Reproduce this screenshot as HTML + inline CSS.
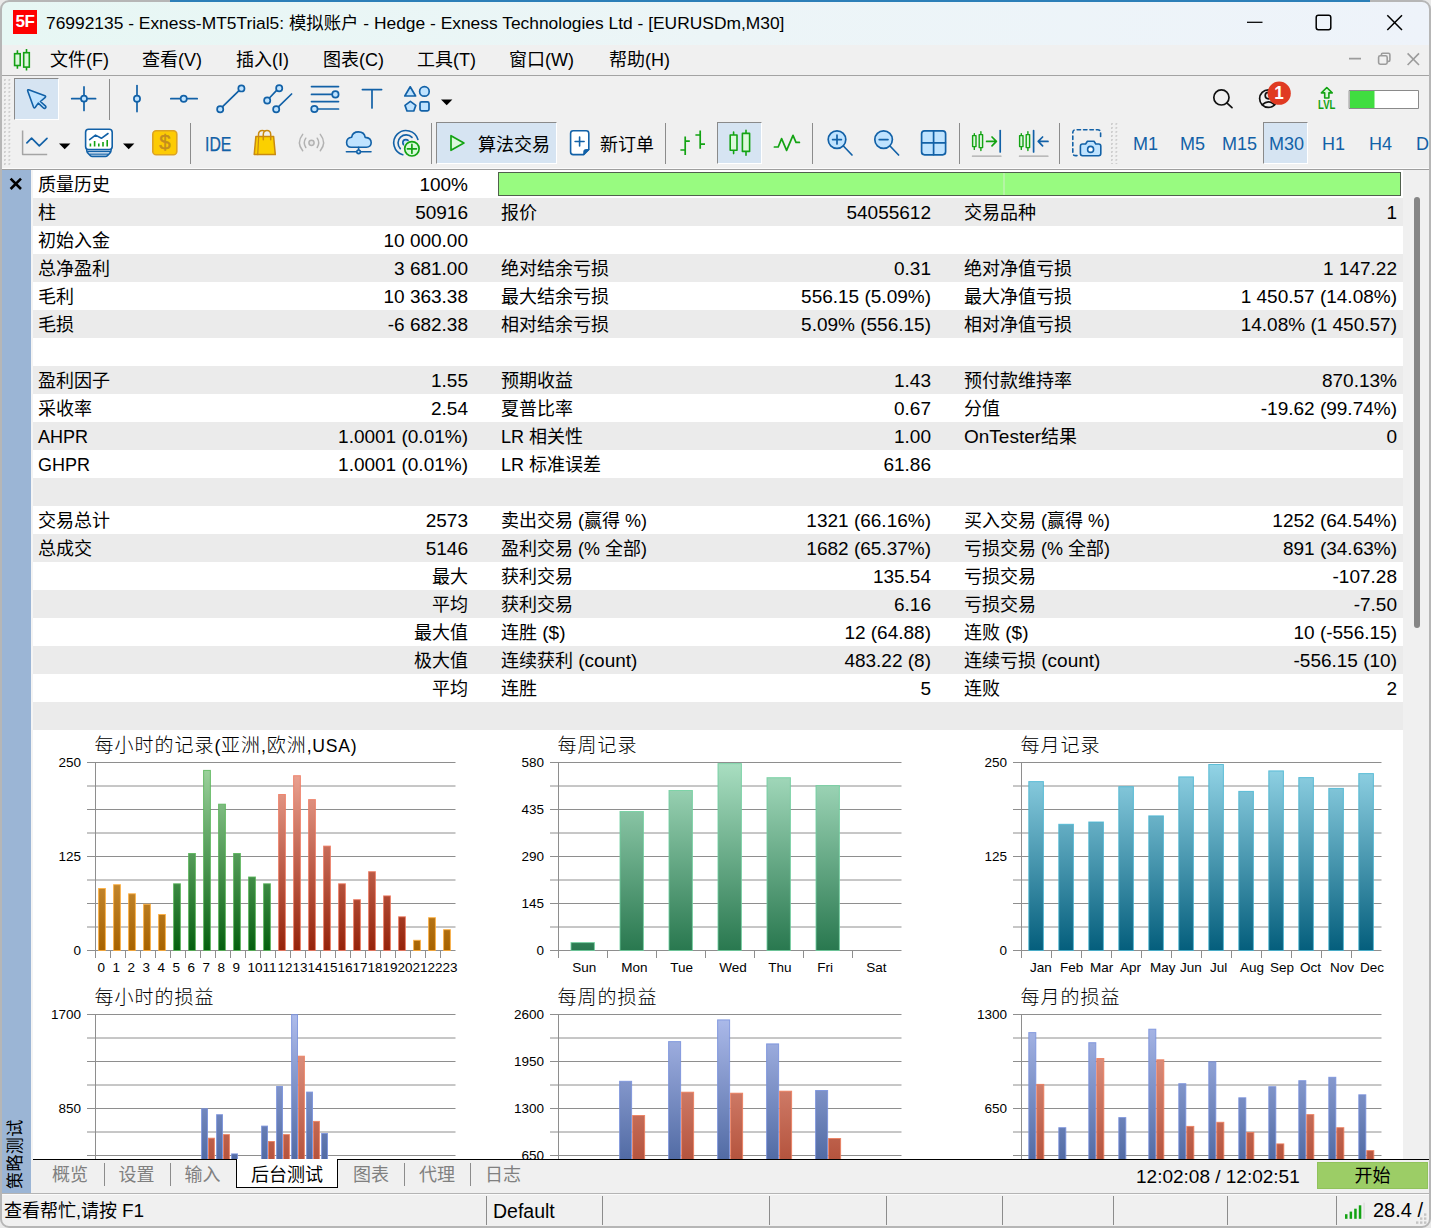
<!DOCTYPE html><html lang="zh-CN"><head><meta charset="utf-8"><title>MetaTrader 5 Strategy Tester</title><style>
*{box-sizing:border-box}
html,body{margin:0;padding:0}
body{width:1431px;height:1228px;overflow:hidden;background:#e9e9e9;font-family:"Liberation Sans","Noto Sans CJK SC",sans-serif;font-size:18px;color:#000;position:relative}
.abs{position:absolute}
#win{position:absolute;left:0;top:0;width:1431px;height:1228px;border-radius:9px 9px 9px 9px;overflow:hidden;background:#f0f0f0}
#frame{position:absolute;left:0;top:0;width:1431px;height:1228px;border-radius:9px;border:2px solid #b6b6b6;border-top-width:2px;pointer-events:none;z-index:50}
#topstrip{position:absolute;left:170px;top:0;width:1200px;height:2px;background:#2c7fb8;z-index:51}
#title{position:absolute;left:0;top:0;width:1431px;height:45px;background:linear-gradient(90deg,#e7f7f4 0%,#ecf5f7 50%,#eef3fa 100%)}
#title .t{position:absolute;left:46px;top:9.6px;height:26px;line-height:26px;font-size:17.4px;white-space:pre;letter-spacing:0px}
#logo{position:absolute;left:13px;top:10px;width:24px;height:24px;background:#fe0000;color:#fff;font-weight:bold;font-size:17px;line-height:24px;text-align:center;letter-spacing:-0.5px}
#menu{position:absolute;left:0;top:45px;width:1431px;height:31px;background:#f0f0f0}
#menu span.m{position:absolute;top:1px;height:30px;line-height:29px;white-space:pre}
.n{font-size:19px}.n8{font-size:18px}
#tb{position:absolute;left:0;top:76px;width:1431px;height:94px;background:#f0f0f0}
.sel{position:absolute;background:#d6e4f2;border-top:1px solid #8a8a8a;border-left:1px solid #8a8a8a;border-right:1px solid #fff;border-bottom:1px solid #fff}
.tbt{position:absolute;white-space:pre;line-height:24px;height:24px}
.tf{position:absolute;top:131px;height:24px;line-height:24px;color:#1261a7;font-size:18px;white-space:pre}
#strip{position:absolute;left:2px;top:170px;width:29px;height:1023px;background:#9bb5d5}
#tbl{position:absolute;left:33px;top:170px;width:1370px;height:560px;background:#fff}
.r{position:absolute;left:0;width:1370px;height:28px;line-height:30px;white-space:pre}
.r.g{background:#ebebeb}
.r span.c{position:absolute;top:0;height:28px;line-height:30px}
.l1{left:5px}.v1{right:935px;text-align:right}
.l2{left:468px}.v2{right:472px}
.l3{left:931px}.v3{right:6px}
#charts{position:absolute;left:33px;top:730px;width:1370px;height:429px;background:#fff;overflow:hidden}
#sbar{position:absolute;left:1403px;top:170px;width:26px;height:989px;background:#f0f0f0}
#tabs{position:absolute;left:31px;top:1159px;width:1398px;height:34px;background:#f0f0f0}
.tab{position:absolute;top:4px;height:26px;line-height:25px;color:#808080;white-space:pre}
.tsep{position:absolute;top:4px;width:1px;height:23px;background:#8c8c8c}
#status{position:absolute;left:0;top:1193px;width:1431px;height:35px;background:#f0f0f0}
.ssep{position:absolute;top:3px;width:1px;height:29px;background:#8c8c8c}
.st{position:absolute;top:5px;height:26px;line-height:26px;white-space:pre}
</style></head><body><div id="win"><div id="title"><div id="logo">5F</div><div class="t">76992135 - Exness-MT5Trial5: 模拟账户 - Hedge - Exness Technologies Ltd - [EURUSDm,M30]</div><svg class="abs" style="left:1230px;top:0" width="201" height="45" viewBox="1230 0 201 45" fill="none" stroke="#000" stroke-width="1.5"><path d="M1247 22.3H1262.5" stroke-width="1.25"/><rect x="1316.2" y="15.2" width="14.6" height="14.6" rx="2.2"/><path d="M1387.3 15.3L1402 30M1402 15.3L1387.3 30"/></svg></div><div id="menu"><svg class="abs" style="left:10px;top:2px" width="26" height="28" viewBox="10 47 26 28"><g stroke="#14a014" stroke-width="1.6" fill="#dcf8dc"><path d="M17.4 50.2V68.8M26.5 49V70.4" fill="none"/><rect x="14.6" y="53.7" width="5.6" height="11.8"/><rect x="23.7" y="52.7" width="5.6" height="14.4"/></g></svg><span class="m" style="left:50px">文件(F)</span><span class="m" style="left:142px">查看(V)</span><span class="m" style="left:236px">插入(I)</span><span class="m" style="left:323px">图表(C)</span><span class="m" style="left:417px">工具(T)</span><span class="m" style="left:509px">窗口(W)</span><span class="m" style="left:609px">帮助(H)</span><svg class="abs" style="left:1340px;top:0" width="91" height="31" viewBox="1340 45 91 31" fill="none" stroke="#9c9c9c" stroke-width="1.6"><path d="M1349 58.6H1361"/><rect x="1378.6" y="55.8" width="8.6" height="8.4" rx="1.6"/><path d="M1381.4 55.6V54.6Q1381.4 53.2 1382.8 53.2H1388.4Q1389.9 53.2 1389.9 54.7V60Q1389.9 61.4 1388.5 61.4H1387.4"/><path d="M1407.6 53.4L1419 65M1419 53.4L1407.6 65"/></svg></div><div class="abs" style="left:0;top:75px;width:1431px;height:1px;background:#a3a3a3"></div><div class="abs" style="left:0;top:76px;width:1431px;height:1px;background:#fbfbfb"></div><div id="tb"><svg class="abs" style="left:4px;top:3px" width="8" height="86"><defs><pattern id="gp4" width="4.5" height="4" patternUnits="userSpaceOnUse"><rect x="0.2" y="0.3" width="1.6" height="1.6" fill="#bababa"/><rect x="1.2" y="1.3" width="1" height="1" fill="#fafafa"/></pattern></defs><rect width="8" height="86" fill="url(#gp4)"/></svg><svg class="abs" style="left:1111px;top:47px" width="8" height="41"><defs><pattern id="gp1111" width="4.5" height="4" patternUnits="userSpaceOnUse"><rect x="0.2" y="0.3" width="1.6" height="1.6" fill="#bababa"/><rect x="1.2" y="1.3" width="1" height="1" fill="#fafafa"/></pattern></defs><rect width="8" height="41" fill="url(#gp1111)"/></svg><div class="sel" style="left:14px;top:2px;width:45px;height:42px"></div><div class="sel" style="left:436px;top:46px;width:121px;height:42px"></div><div class="sel" style="left:717px;top:46px;width:45px;height:42px"></div><div class="sel" style="left:1263px;top:46px;width:45px;height:42px"></div><div class="abs" style="left:109px;top:3px;width:1px;height:41px;background:#8c8c8c"></div><div class="abs" style="left:190px;top:47px;width:1px;height:41px;background:#8c8c8c"></div><div class="abs" style="left:431px;top:47px;width:1px;height:41px;background:#8c8c8c"></div><div class="abs" style="left:665px;top:47px;width:1px;height:41px;background:#8c8c8c"></div><div class="abs" style="left:812px;top:47px;width:1px;height:41px;background:#8c8c8c"></div><div class="abs" style="left:959px;top:47px;width:1px;height:41px;background:#8c8c8c"></div><div class="abs" style="left:1059px;top:47px;width:1px;height:41px;background:#8c8c8c"></div><svg class="abs" style="left:0;top:0" width="1431" height="94" viewBox="0 76 1431 94" fill="none" stroke-linecap="round" stroke-linejoin="round"><g stroke="#1261a7" stroke-width="1.7" fill="#bfe3ff"><path d="M28.7 89.8L44.9 95.7Q46.3 96.5 45 97.6L40.4 101.5L45.6 106.2Q46.4 107.4 45.2 108.2Q44.2 108.8 43.2 107.8L38.3 103.1L35.3 107.3Q34.2 108.6 33.5 107L27.7 90.9Q27.3 89.3 28.7 89.8Z" stroke-width="1.6"/><path d="M71.7 98.7H95.6M84 86.9V110.5" fill="none"/><circle cx="84" cy="98.7" r="3"/><path d="M137 85.6V111.6" fill="none"/><circle cx="137" cy="98.7" r="3.1"/><path d="M170.8 98.7H197.2" fill="none"/><circle cx="183.7" cy="98.7" r="3.1"/><path d="M222.6 106.6L239 90.6" fill="none"/><circle cx="220.2" cy="109.2" r="3.1"/><circle cx="241.4" cy="88.4" r="3.1"/><path d="M269.4 98L276.6 90.4M278.6 106.6L291.6 94" fill="none"/><circle cx="279.2" cy="88.2" r="3.1"/><circle cx="267.2" cy="100.5" r="3.1"/><circle cx="276.2" cy="109.2" r="3.1"/><path d="M311.5 86.6H338.5M311.5 94.4H332M311.5 101.6H338.5M317.6 109H338.5" fill="none"/><circle cx="335.4" cy="94.4" r="3.2"/><circle cx="314.4" cy="109" r="3.2"/><path d="M362.4 89.6H381.6M372 89.6V108" fill="none"/><path d="M410.2 86.8L415.6 96H404.8Z"/><circle cx="424.4" cy="91.4" r="4.8"/><path d="M410.4 101.4L415.8 105.4L413.8 111H407L405 105.4Z"/><rect x="420" y="101.8" width="9" height="9" rx="1.6"/></g><path d="M441 99.4H452.4L446.7 105.2Z" fill="#000" stroke="none"/><g stroke="#111" stroke-width="1.7"><circle cx="1221.4" cy="97.4" r="7.6"/><path d="M1226.8 102.8L1232 107.6"/><circle cx="1268.4" cy="98.6" r="8.8"/><circle cx="1268.4" cy="95.6" r="3.2"/><path d="M1262.4 104.6Q1268.4 99 1274.4 104.6"/></g><circle cx="1279.2" cy="93.2" r="11.6" fill="#e03a22" stroke="none"/><g stroke="#13a313" stroke-width="1.6"><path d="M1326.8 87.5L1332.2 92.9H1328.9V98H1324.7V92.9H1321.4Z" fill="#dcf8dc"/></g><rect x="1349.5" y="90.5" width="69" height="18" fill="#fff" stroke="#8a8a8a" stroke-width="1"/><rect x="1350" y="91" width="24.5" height="17" fill="#40dd40" stroke="none"/><path d="M22.6 130.4V154.6H47.2" stroke="#a4a4a4" stroke-width="1.5" stroke-linecap="butt"/><path d="M26.9 142.8L31.6 138.2L39.3 145.8L47 138.3" stroke="#1261a7" stroke-width="1.7"/><path d="M59 143.4H70.4L64.7 149.2Z M123 143.4H134.4L128.7 149.2Z" fill="#000" stroke="none"/><g stroke="#1261a7" stroke-width="1.6"><path d="M86.6 148Q86.6 152 88 153.2L90.4 155.6Q91.2 156.4 92.4 156.4H105.4Q106.6 156.4 107.4 155.6L109.8 153.2Q111.2 152 111.2 148Z" fill="#f6faff"/><path d="M87.8 151.7H110M89.8 154.1H108" stroke-width="1.2"/><rect x="85.6" y="129.2" width="26.6" height="20.4" rx="3" fill="#fff"/><path d="M89.6 139.6L95.5 135.1L101.4 138.3L108 133.5" /></g><path d="M90.4 146.6V143.4M94.6 146.6V141M98.8 146.6V143.6M103 146.6V142M107.2 146.6V140" stroke="#13a313" stroke-width="1.6" stroke-linecap="butt"/><rect x="152.8" y="130.8" width="24" height="24" rx="3.4" fill="#fdcb04" stroke="#dca324" stroke-width="1.6"/><g stroke="#c98a10" stroke-width="1.5"><path d="M255.9 136.4H273.6L275.3 154.6H254.2Z" fill="#fbd000"/><path d="M258.7 136.4L257.7 154.6" stroke-width="1.2"/><path d="M258.5 136V134.4Q258.7 130.5 262.4 130.5Q263.6 130.5 264.6 131.2"/><path d="M263.3 139.8V134.4Q263.5 130.5 267 130.5Q270.5 130.5 270.7 134.4V139.8"/></g><g stroke="#b2b2b2" stroke-width="1.5"><circle cx="311.5" cy="142.8" r="2.6" fill="#e6e6e6"/><path d="M305.8 138.2Q302.8 142.8 305.8 147.5M317.2 138.2Q320.2 142.8 317.2 147.5M302.7 134.4Q296.1 142.8 302.7 150.7M320.3 134.4Q326.9 142.8 320.3 150.7"/></g><g stroke="#1261a7" stroke-width="1.6"><path d="M351.2 147.2Q346.6 147 346.6 142.4Q346.8 137.6 351.7 137.2Q352.6 131.9 358.4 131.9Q364.4 132 365.2 137.4Q371.2 137.8 371.2 142.8Q371 147.2 366.4 147.2Z" fill="#bfe3ff"/><path d="M358.6 147.4V149.8M346.4 151.8H356.6M360.6 151.8H371"/><circle cx="358.6" cy="151.8" r="1.8" fill="#bfe3ff"/></g><g stroke="#1261a7" stroke-width="1.6"><path d="M402.8 154.7A12.3 12.3 0 1 1 417.9 139.5"/><path d="M400.3 148.6A8 8 0 1 1 412 137.4"/><circle cx="405.8" cy="142.6" r="3" fill="#bfe3ff"/></g><circle cx="411.9" cy="148.8" r="8.9" fill="#f0f0f0" stroke="none"/><circle cx="411.9" cy="148.8" r="7.2" fill="#d9fadb" stroke="#13a313" stroke-width="1.7"/><path d="M411.9 144.4V153.2M407.4 148.8H416.4" stroke="#13a313" stroke-width="1.7"/><path d="M451 135.7L463.9 143L451 150.3Z" fill="#dcf8dc" stroke="#13a313" stroke-width="1.7"/><path d="M573.2 130.8H586.2Q588.8 130.8 588.8 133.4V149.4L583.6 154.6H573.2Q570.6 154.6 570.6 152V133.4Q570.6 130.8 573.2 130.8Z" fill="#fff" stroke="#1261a7" stroke-width="1.6"/><path d="M588.6 149.6H585.6Q583.8 149.6 583.8 151.4V154.4Z" fill="#1261a7" stroke="#1261a7" stroke-width="1"/><path d="M579.6 137V146M575.1 141.5H584.1" stroke="#1261a7" stroke-width="1.6"/><path d="M685.2 136.6V155M680.4 150H685.2M685.2 141.2H689.8M700.2 130.4V148.8M695.4 135H700.2M700.2 144.2H705" stroke="#13a313" stroke-width="1.7" stroke-linecap="butt"/><g stroke="#13a313" stroke-width="1.6"><path d="M733.6 132V153.6M746 130.2V155.2"/><rect x="730.2" y="135" width="6.8" height="15.2" fill="#dcf8dc"/><rect x="742.4" y="133.4" width="7.2" height="18" fill="#dcf8dc"/></g><path d="M774.4 147H778.2L781.6 138.6L786.6 150.4L793 135.4L796 142.4H799.4" stroke="#13a313" stroke-width="1.7"/><g stroke="#1261a7" stroke-width="1.7"><circle cx="837" cy="139.6" r="8.8" fill="#bfe3ff"/><path d="M843.4 146L852 155M832.6 139.6H841.4M837 135.2V144"/><circle cx="883.6" cy="139.6" r="8.8" fill="#bfe3ff"/><path d="M890 146L898.6 155M879.2 139.6H888"/></g><g stroke="#1261a7" stroke-width="1.7"><rect x="921.6" y="130.8" width="24" height="24" rx="3" fill="#bfe3ff"/><path d="M933.6 131V154.6M921.8 142.8H945.4"/></g><g stroke="#13a313" stroke-width="1.4"><path d="M974.3 133.6V149.4M980.9 131.6V150.6"/><rect x="972.6" y="135.6" width="3.4" height="11" fill="#dcf8dc"/><rect x="979.2" y="134.6" width="3.4" height="13" fill="#dcf8dc"/></g><path d="M986.6 141.4H996M992 137L996.4 141.4L992 145.8" stroke="#13a313" stroke-width="1.7"/><path d="M1000.2 130.6V152" stroke="#1261a7" stroke-width="1.7"/><path d="M972.4 156.2H1001" stroke="#a8a8a8" stroke-width="1.2"/><g stroke="#13a313" stroke-width="1.4"><path d="M1021.3 133.6V149.4M1027.9 131.6V150.6"/><rect x="1019.6" y="135.6" width="3.4" height="11" fill="#dcf8dc"/><rect x="1026.2" y="134.6" width="3.4" height="13" fill="#dcf8dc"/></g><path d="M1033.6 130.6V152M1038.6 141.4H1048M1042.6 137L1038.2 141.4L1042.6 145.8" stroke="#1261a7" stroke-width="1.7"/><path d="M1019.4 156.2H1048" stroke="#a8a8a8" stroke-width="1.2"/><g stroke="#1261a7" stroke-width="1.6"><path d="M1077 155.6H1075.6Q1072.8 155.6 1072.8 152.8V132.6Q1072.8 129.8 1075.6 129.8H1097.8Q1100.6 129.8 1100.6 132.6V137" stroke-dasharray="3.4 3"/><path d="M1082.6 144H1085.6L1087.4 141.2H1094L1095.8 144H1098.6Q1100.8 144 1100.8 146.2V153.6Q1100.8 155.8 1098.6 155.8H1082.6Q1080.4 155.8 1080.4 153.6V146.2Q1080.4 144 1082.6 144Z" fill="#bfe3ff"/><circle cx="1090.6" cy="149.4" r="3" fill="#fff"/></g></svg><div class="tbt" style="left:1273.2px;top:5px;color:#fff;font-size:19px;font-weight:bold;width:12px;text-align:center;transform:scaleX(0.9)">1</div><div class="tbt" style="left:1317px;top:23px;color:#13a313;font-size:12px;font-weight:bold;line-height:12px;height:12px;transform:scaleX(0.8);transform-origin:0 50%;left:1318px">LVL</div><div class="tbt" style="left:156.5px;top:54px;color:#c48d1e;font-size:20.5px;-webkit-text-stroke:0.45px #c48d1e;width:17px;text-align:center">$</div><div class="tbt" style="left:204.5px;top:55.5px;color:#1261a7;font-size:19.5px;-webkit-text-stroke:0.25px #1261a7;transform:scaleX(0.81);transform-origin:0 50%">IDE</div><div class="tbt" style="left:478px;top:56.5px">算法交易</div><div class="tbt" style="left:600px;top:56.5px">新订单</div><div class="tf" style="left:1133px;top:56px">M1</div><div class="tf" style="left:1180px;top:56px">M5</div><div class="tf" style="left:1222px;top:56px">M15</div><div class="tf" style="left:1269px;top:56px">M30</div><div class="tf" style="left:1322px;top:56px">H1</div><div class="tf" style="left:1369px;top:56px">H4</div><div class="tf" style="left:1416px;top:56px">D1</div></div><div class="abs" style="left:0;top:168px;width:1431px;height:1px;background:#fbfbfb"></div><div class="abs" style="left:0;top:169px;width:1431px;height:1px;background:#9e9e9e"></div><div id="strip"><svg class="abs" style="left:6px;top:6px" width="16" height="16" viewBox="0 0 16 16"><path d="M2.6 2.6L13 13M13 2.6L2.6 13" stroke="#000" stroke-width="2.6" fill="none"/></svg><div class="abs" style="left:0px;top:1019px;width:100px;height:27px;line-height:27px;font-size:17px;letter-spacing:0.4px;white-space:pre;transform:rotate(-90deg);transform-origin:0 0">策略测试</div></div><div class="abs" style="left:31px;top:170px;width:2px;height:989px;background:#f4f4f4"></div><div id="tbl"><div class="r" style="top:0px"><span class="c l1">质量历史</span><span class="c v1"><span class="n">100%</span></span></div><div class="r g" style="top:28px"><span class="c l1">柱</span><span class="c v1"><span class="n">50916</span></span><span class="c l2">报价</span><span class="c v2"><span class="n">54055612</span></span><span class="c l3">交易品种</span><span class="c v3"><span class="n">1</span></span></div><div class="r" style="top:56px"><span class="c l1">初始入金</span><span class="c v1"><span class="n">10 000.00</span></span></div><div class="r g" style="top:84px"><span class="c l1">总净盈利</span><span class="c v1"><span class="n">3 681.00</span></span><span class="c l2">绝对结余亏损</span><span class="c v2"><span class="n">0.31</span></span><span class="c l3">绝对净值亏损</span><span class="c v3"><span class="n">1 147.22</span></span></div><div class="r" style="top:112px"><span class="c l1">毛利</span><span class="c v1"><span class="n">10 363.38</span></span><span class="c l2">最大结余亏损</span><span class="c v2"><span class="n">556.15 (5.09%)</span></span><span class="c l3">最大净值亏损</span><span class="c v3"><span class="n">1 450.57 (14.08%)</span></span></div><div class="r g" style="top:140px"><span class="c l1">毛损</span><span class="c v1"><span class="n">-6 682.38</span></span><span class="c l2">相对结余亏损</span><span class="c v2"><span class="n">5.09% (556.15)</span></span><span class="c l3">相对净值亏损</span><span class="c v3"><span class="n">14.08% (1 450.57)</span></span></div><div class="r" style="top:168px"></div><div class="r g" style="top:196px"><span class="c l1">盈利因子</span><span class="c v1"><span class="n">1.55</span></span><span class="c l2">预期收益</span><span class="c v2"><span class="n">1.43</span></span><span class="c l3">预付款维持率</span><span class="c v3"><span class="n">870.13%</span></span></div><div class="r" style="top:224px"><span class="c l1">采收率</span><span class="c v1"><span class="n">2.54</span></span><span class="c l2">夏普比率</span><span class="c v2"><span class="n">0.67</span></span><span class="c l3">分值</span><span class="c v3"><span class="n">-19.62 (99.74%)</span></span></div><div class="r g" style="top:252px"><span class="c l1"><span class="n8">AHPR</span></span><span class="c v1"><span class="n">1.0001 (0.01%)</span></span><span class="c l2"><span class="n8">LR </span>相关性</span><span class="c v2"><span class="n">1.00</span></span><span class="c l3"><span class="n">OnTester</span>结果</span><span class="c v3"><span class="n">0</span></span></div><div class="r" style="top:280px"><span class="c l1"><span class="n8">GHPR</span></span><span class="c v1"><span class="n">1.0001 (0.01%)</span></span><span class="c l2"><span class="n8">LR </span>标准误差</span><span class="c v2"><span class="n">61.86</span></span></div><div class="r g" style="top:308px"></div><div class="r" style="top:336px"><span class="c l1">交易总计</span><span class="c v1"><span class="n">2573</span></span><span class="c l2">卖出交易<span class="n8"> (</span>赢得<span class="n8"> %)</span></span><span class="c v2"><span class="n">1321 (66.16%)</span></span><span class="c l3">买入交易<span class="n8"> (</span>赢得<span class="n8"> %)</span></span><span class="c v3"><span class="n">1252 (64.54%)</span></span></div><div class="r g" style="top:364px"><span class="c l1">总成交</span><span class="c v1"><span class="n">5146</span></span><span class="c l2">盈利交易<span class="n8"> (% </span>全部<span class="n8">)</span></span><span class="c v2"><span class="n">1682 (65.37%)</span></span><span class="c l3">亏损交易<span class="n8"> (% </span>全部<span class="n8">)</span></span><span class="c v3"><span class="n">891 (34.63%)</span></span></div><div class="r" style="top:392px"><span class="c v1">最大</span><span class="c l2">获利交易</span><span class="c v2"><span class="n">135.54</span></span><span class="c l3">亏损交易</span><span class="c v3"><span class="n">-107.28</span></span></div><div class="r g" style="top:420px"><span class="c v1">平均</span><span class="c l2">获利交易</span><span class="c v2"><span class="n">6.16</span></span><span class="c l3">亏损交易</span><span class="c v3"><span class="n">-7.50</span></span></div><div class="r" style="top:448px"><span class="c v1">最大值</span><span class="c l2">连胜<span class="n"> ($)</span></span><span class="c v2"><span class="n">12 (64.88)</span></span><span class="c l3">连败<span class="n"> ($)</span></span><span class="c v3"><span class="n">10 (-556.15)</span></span></div><div class="r g" style="top:476px"><span class="c v1">极大值</span><span class="c l2">连续获利<span class="n"> (count)</span></span><span class="c v2"><span class="n">483.22 (8)</span></span><span class="c l3">连续亏损<span class="n"> (count)</span></span><span class="c v3"><span class="n">-556.15 (10)</span></span></div><div class="r" style="top:504px"><span class="c v1">平均</span><span class="c l2">连胜</span><span class="c v2"><span class="n">5</span></span><span class="c l3">连败</span><span class="c v3"><span class="n">2</span></span></div><div class="r g" style="top:532px"></div><div class="abs" style="left:465px;top:2px;width:903px;height:24px;background:#98fb80;border:1px solid #51604d"></div><div class="abs" style="left:970px;top:3px;width:2px;height:22px;background:#b4f5a4"></div></div><div id="sbar"><div class="abs" style="left:11px;top:27px;width:6px;height:431px;border-radius:3px;background:#868686"></div></div><svg id="charts" viewBox="33 730 1370 429" width="1370" height="429"><defs><linearGradient id="or0" gradientUnits="userSpaceOnUse" x1="0" y1="762" x2="0" y2="950.5"><stop offset="0" stop-color="#f4c680"/><stop offset="1" stop-color="#a66200"/></linearGradient><linearGradient id="gr0" gradientUnits="userSpaceOnUse" x1="0" y1="762" x2="0" y2="950.5"><stop offset="0" stop-color="#a2d6a2"/><stop offset="1" stop-color="#055f0f"/></linearGradient><linearGradient id="rd0" gradientUnits="userSpaceOnUse" x1="0" y1="762" x2="0" y2="950.5"><stop offset="0" stop-color="#f0aa9a"/><stop offset="1" stop-color="#94220a"/></linearGradient><linearGradient id="tl0" gradientUnits="userSpaceOnUse" x1="0" y1="762" x2="0" y2="950.5"><stop offset="0" stop-color="#aadfc2"/><stop offset="1" stop-color="#29784f"/></linearGradient><linearGradient id="cy0" gradientUnits="userSpaceOnUse" x1="0" y1="762" x2="0" y2="950.5"><stop offset="0" stop-color="#94d5e7"/><stop offset="1" stop-color="#045e7c"/></linearGradient><linearGradient id="bl0" gradientUnits="userSpaceOnUse" x1="0" y1="762" x2="0" y2="950.5"><stop offset="0" stop-color="#aebcec"/><stop offset="1" stop-color="#36538f"/></linearGradient><linearGradient id="r20" gradientUnits="userSpaceOnUse" x1="0" y1="762" x2="0" y2="950.5"><stop offset="0" stop-color="#eaa494"/><stop offset="1" stop-color="#a53c24"/></linearGradient><linearGradient id="or1" gradientUnits="userSpaceOnUse" x1="0" y1="1014" x2="0" y2="1202.5"><stop offset="0" stop-color="#f4c680"/><stop offset="1" stop-color="#a66200"/></linearGradient><linearGradient id="gr1" gradientUnits="userSpaceOnUse" x1="0" y1="1014" x2="0" y2="1202.5"><stop offset="0" stop-color="#a2d6a2"/><stop offset="1" stop-color="#055f0f"/></linearGradient><linearGradient id="rd1" gradientUnits="userSpaceOnUse" x1="0" y1="1014" x2="0" y2="1202.5"><stop offset="0" stop-color="#f0aa9a"/><stop offset="1" stop-color="#94220a"/></linearGradient><linearGradient id="tl1" gradientUnits="userSpaceOnUse" x1="0" y1="1014" x2="0" y2="1202.5"><stop offset="0" stop-color="#aadfc2"/><stop offset="1" stop-color="#29784f"/></linearGradient><linearGradient id="cy1" gradientUnits="userSpaceOnUse" x1="0" y1="1014" x2="0" y2="1202.5"><stop offset="0" stop-color="#94d5e7"/><stop offset="1" stop-color="#045e7c"/></linearGradient><linearGradient id="bl1" gradientUnits="userSpaceOnUse" x1="0" y1="1014" x2="0" y2="1202.5"><stop offset="0" stop-color="#aebcec"/><stop offset="1" stop-color="#36538f"/></linearGradient><linearGradient id="r21" gradientUnits="userSpaceOnUse" x1="0" y1="1014" x2="0" y2="1202.5"><stop offset="0" stop-color="#eaa494"/><stop offset="1" stop-color="#a53c24"/></linearGradient></defs><text x="94.4" y="752.0" font-size="19" letter-spacing="1" font-weight="300" fill="#000">每小时的记录<tspan font-size="17.6" font-weight="400" letter-spacing="0.75">(</tspan>亚洲<tspan font-size="17.6" font-weight="400" letter-spacing="0.75">,</tspan>欧洲<tspan font-size="17.6" font-weight="400" letter-spacing="0.75">,USA)</tspan></text><g stroke="#8e8e8e" stroke-width="1"><path d="M87.0 762.5H455.5"/><path d="M87.0 786.0H455.5"/><path d="M87.0 809.5H455.5"/><path d="M87.0 833.0H455.5"/><path d="M87.0 856.5H455.5"/><path d="M87.0 880.0H455.5"/><path d="M87.0 903.5H455.5"/><path d="M87.0 927.0H455.5"/><path d="M87.0 950.5H455.5"/><path d="M95.5 762.0V958.0"/><path d="M110.5 950.5V958.0"/><path d="M125.5 950.5V958.0"/><path d="M140.5 950.5V958.0"/><path d="M155.5 950.5V958.0"/><path d="M170.5 950.5V958.0"/><path d="M185.5 950.5V958.0"/><path d="M200.5 950.5V958.0"/><path d="M215.5 950.5V958.0"/><path d="M230.5 950.5V958.0"/><path d="M245.5 950.5V958.0"/><path d="M260.5 950.5V958.0"/><path d="M275.5 950.5V958.0"/><path d="M290.5 950.5V958.0"/><path d="M305.5 950.5V958.0"/><path d="M320.5 950.5V958.0"/><path d="M335.5 950.5V958.0"/><path d="M350.5 950.5V958.0"/><path d="M365.5 950.5V958.0"/><path d="M380.5 950.5V958.0"/><path d="M395.5 950.5V958.0"/><path d="M410.5 950.5V958.0"/><path d="M425.5 950.5V958.0"/><path d="M440.5 950.5V958.0"/></g><g font-size="13.5" fill="#000" class="cl"><text x="81.0" y="767.3" text-anchor="end">250</text><text x="81.0" y="861.3" text-anchor="end">125</text><text x="81.0" y="955.3" text-anchor="end">0</text><text x="97.6" y="972.0">0</text><text x="112.6" y="972.0">1</text><text x="127.6" y="972.0">2</text><text x="142.6" y="972.0">3</text><text x="157.6" y="972.0">4</text><text x="172.6" y="972.0">5</text><text x="187.6" y="972.0">6</text><text x="202.6" y="972.0">7</text><text x="217.6" y="972.0">8</text><text x="232.6" y="972.0">9</text><text x="247.6" y="972.0">10</text><text x="262.6" y="972.0">11</text><text x="277.6" y="972.0">12</text><text x="292.6" y="972.0">13</text><text x="307.6" y="972.0">14</text><text x="322.6" y="972.0">15</text><text x="337.6" y="972.0">16</text><text x="352.6" y="972.0">17</text><text x="367.6" y="972.0">18</text><text x="382.6" y="972.0">19</text><text x="397.6" y="972.0">20</text><text x="412.6" y="972.0">21</text><text x="427.6" y="972.0">22</text><text x="442.6" y="972.0">23</text></g><rect x="98.60" y="888.50" width="6.80" height="62.00" fill="url(#or0)" stroke="#ffae3c" stroke-width="1" stroke-opacity="0.85"/><rect x="113.60" y="884.70" width="6.80" height="65.80" fill="url(#or0)" stroke="#ffae3c" stroke-width="1" stroke-opacity="0.85"/><rect x="128.60" y="893.80" width="6.80" height="56.70" fill="url(#or0)" stroke="#ffae3c" stroke-width="1" stroke-opacity="0.85"/><rect x="143.60" y="904.30" width="6.80" height="46.20" fill="url(#or0)" stroke="#ffae3c" stroke-width="1" stroke-opacity="0.85"/><rect x="158.60" y="914.50" width="6.80" height="36.00" fill="url(#or0)" stroke="#ffae3c" stroke-width="1" stroke-opacity="0.85"/><rect x="173.60" y="883.80" width="6.80" height="66.70" fill="url(#gr0)" stroke="#58b458" stroke-width="1" stroke-opacity="0.85"/><rect x="188.60" y="853.50" width="6.80" height="97.00" fill="url(#gr0)" stroke="#58b458" stroke-width="1" stroke-opacity="0.85"/><rect x="203.60" y="770.40" width="6.80" height="180.10" fill="url(#gr0)" stroke="#58b458" stroke-width="1" stroke-opacity="0.85"/><rect x="218.60" y="804.20" width="6.80" height="146.30" fill="url(#gr0)" stroke="#58b458" stroke-width="1" stroke-opacity="0.85"/><rect x="233.60" y="853.50" width="6.80" height="97.00" fill="url(#gr0)" stroke="#58b458" stroke-width="1" stroke-opacity="0.85"/><rect x="248.60" y="877.00" width="6.80" height="73.50" fill="url(#gr0)" stroke="#58b458" stroke-width="1" stroke-opacity="0.85"/><rect x="263.60" y="883.80" width="6.80" height="66.70" fill="url(#gr0)" stroke="#58b458" stroke-width="1" stroke-opacity="0.85"/><rect x="278.60" y="794.50" width="6.80" height="156.00" fill="url(#rd0)" stroke="#ee7a62" stroke-width="1" stroke-opacity="0.85"/><rect x="293.60" y="775.70" width="6.80" height="174.80" fill="url(#rd0)" stroke="#ee7a62" stroke-width="1" stroke-opacity="0.85"/><rect x="308.60" y="799.60" width="6.80" height="150.90" fill="url(#rd0)" stroke="#ee7a62" stroke-width="1" stroke-opacity="0.85"/><rect x="323.60" y="846.10" width="6.80" height="104.40" fill="url(#rd0)" stroke="#ee7a62" stroke-width="1" stroke-opacity="0.85"/><rect x="338.60" y="883.80" width="6.80" height="66.70" fill="url(#rd0)" stroke="#ee7a62" stroke-width="1" stroke-opacity="0.85"/><rect x="353.60" y="899.70" width="6.80" height="50.80" fill="url(#rd0)" stroke="#ee7a62" stroke-width="1" stroke-opacity="0.85"/><rect x="368.60" y="871.70" width="6.80" height="78.80" fill="url(#rd0)" stroke="#ee7a62" stroke-width="1" stroke-opacity="0.85"/><rect x="383.60" y="895.90" width="6.80" height="54.60" fill="url(#rd0)" stroke="#ee7a62" stroke-width="1" stroke-opacity="0.85"/><rect x="398.60" y="916.80" width="6.80" height="33.70" fill="url(#rd0)" stroke="#ee7a62" stroke-width="1" stroke-opacity="0.85"/><rect x="413.60" y="940.30" width="6.80" height="10.20" fill="url(#or0)" stroke="#ffae3c" stroke-width="1" stroke-opacity="0.85"/><rect x="428.60" y="917.70" width="6.80" height="32.80" fill="url(#or0)" stroke="#ffae3c" stroke-width="1" stroke-opacity="0.85"/><rect x="443.60" y="929.70" width="6.80" height="20.80" fill="url(#or0)" stroke="#ffae3c" stroke-width="1" stroke-opacity="0.85"/><text x="557.4" y="752.0" font-size="19" letter-spacing="1" font-weight="300" fill="#000">每周记录</text><g stroke="#8e8e8e" stroke-width="1"><path d="M550.0 762.5H901.5"/><path d="M550.0 786.0H901.5"/><path d="M550.0 809.5H901.5"/><path d="M550.0 833.0H901.5"/><path d="M550.0 856.5H901.5"/><path d="M550.0 880.0H901.5"/><path d="M550.0 903.5H901.5"/><path d="M550.0 927.0H901.5"/><path d="M550.0 950.5H901.5"/><path d="M558.5 762.0V958.0"/><path d="M607.5 950.5V958.0"/><path d="M656.5 950.5V958.0"/><path d="M705.5 950.5V958.0"/><path d="M754.5 950.5V958.0"/><path d="M803.5 950.5V958.0"/><path d="M852.5 950.5V958.0"/></g><g font-size="13.5" fill="#000" class="cl"><text x="544.0" y="767.3" text-anchor="end">580</text><text x="544.0" y="814.3" text-anchor="end">435</text><text x="544.0" y="861.3" text-anchor="end">290</text><text x="544.0" y="908.3" text-anchor="end">145</text><text x="544.0" y="955.3" text-anchor="end">0</text><text x="572.2" y="972.0">Sun</text><text x="621.2" y="972.0">Mon</text><text x="670.2" y="972.0">Tue</text><text x="719.2" y="972.0">Wed</text><text x="768.2" y="972.0">Thu</text><text x="817.2" y="972.0">Fri</text><text x="866.2" y="972.0">Sat</text></g><rect x="571.00" y="942.60" width="23.40" height="7.90" fill="url(#tl0)" stroke="#70cf9f" stroke-width="1" stroke-opacity="0.85"/><rect x="620.00" y="811.50" width="23.40" height="139.00" fill="url(#tl0)" stroke="#70cf9f" stroke-width="1" stroke-opacity="0.85"/><rect x="669.00" y="790.50" width="23.40" height="160.00" fill="url(#tl0)" stroke="#70cf9f" stroke-width="1" stroke-opacity="0.85"/><rect x="718.00" y="763.60" width="23.40" height="186.90" fill="url(#tl0)" stroke="#70cf9f" stroke-width="1" stroke-opacity="0.85"/><rect x="767.00" y="777.70" width="23.40" height="172.80" fill="url(#tl0)" stroke="#70cf9f" stroke-width="1" stroke-opacity="0.85"/><rect x="816.00" y="785.60" width="23.40" height="164.90" fill="url(#tl0)" stroke="#70cf9f" stroke-width="1" stroke-opacity="0.85"/><text x="1020.4" y="752.0" font-size="19" letter-spacing="1" font-weight="300" fill="#000">每月记录</text><g stroke="#8e8e8e" stroke-width="1"><path d="M1013.0 762.5H1381.5"/><path d="M1013.0 786.0H1381.5"/><path d="M1013.0 809.5H1381.5"/><path d="M1013.0 833.0H1381.5"/><path d="M1013.0 856.5H1381.5"/><path d="M1013.0 880.0H1381.5"/><path d="M1013.0 903.5H1381.5"/><path d="M1013.0 927.0H1381.5"/><path d="M1013.0 950.5H1381.5"/><path d="M1021.5 762.0V958.0"/><path d="M1051.5 950.5V958.0"/><path d="M1081.5 950.5V958.0"/><path d="M1111.5 950.5V958.0"/><path d="M1141.5 950.5V958.0"/><path d="M1171.5 950.5V958.0"/><path d="M1201.5 950.5V958.0"/><path d="M1231.5 950.5V958.0"/><path d="M1261.5 950.5V958.0"/><path d="M1291.5 950.5V958.0"/><path d="M1321.5 950.5V958.0"/><path d="M1351.5 950.5V958.0"/></g><g font-size="13.5" fill="#000" class="cl"><text x="1007.0" y="767.3" text-anchor="end">250</text><text x="1007.0" y="861.3" text-anchor="end">125</text><text x="1007.0" y="955.3" text-anchor="end">0</text><text x="1030.0" y="972.0">Jan</text><text x="1060.0" y="972.0">Feb</text><text x="1090.0" y="972.0">Mar</text><text x="1120.0" y="972.0">Apr</text><text x="1150.0" y="972.0">May</text><text x="1180.0" y="972.0">Jun</text><text x="1210.0" y="972.0">Jul</text><text x="1240.0" y="972.0">Aug</text><text x="1270.0" y="972.0">Sep</text><text x="1300.0" y="972.0">Oct</text><text x="1330.0" y="972.0">Nov</text><text x="1360.0" y="972.0">Dec</text></g><rect x="1028.80" y="781.60" width="14.60" height="168.90" fill="url(#cy0)" stroke="#4ab6d2" stroke-width="1" stroke-opacity="0.85"/><rect x="1058.80" y="824.30" width="14.60" height="126.20" fill="url(#cy0)" stroke="#4ab6d2" stroke-width="1" stroke-opacity="0.85"/><rect x="1088.80" y="822.00" width="14.60" height="128.50" fill="url(#cy0)" stroke="#4ab6d2" stroke-width="1" stroke-opacity="0.85"/><rect x="1118.80" y="786.70" width="14.60" height="163.80" fill="url(#cy0)" stroke="#4ab6d2" stroke-width="1" stroke-opacity="0.85"/><rect x="1148.80" y="815.90" width="14.60" height="134.60" fill="url(#cy0)" stroke="#4ab6d2" stroke-width="1" stroke-opacity="0.85"/><rect x="1178.80" y="776.90" width="14.60" height="173.60" fill="url(#cy0)" stroke="#4ab6d2" stroke-width="1" stroke-opacity="0.85"/><rect x="1208.80" y="764.50" width="14.60" height="186.00" fill="url(#cy0)" stroke="#4ab6d2" stroke-width="1" stroke-opacity="0.85"/><rect x="1238.80" y="791.40" width="14.60" height="159.10" fill="url(#cy0)" stroke="#4ab6d2" stroke-width="1" stroke-opacity="0.85"/><rect x="1268.80" y="770.90" width="14.60" height="179.60" fill="url(#cy0)" stroke="#4ab6d2" stroke-width="1" stroke-opacity="0.85"/><rect x="1298.80" y="777.60" width="14.60" height="172.90" fill="url(#cy0)" stroke="#4ab6d2" stroke-width="1" stroke-opacity="0.85"/><rect x="1328.80" y="788.40" width="14.60" height="162.10" fill="url(#cy0)" stroke="#4ab6d2" stroke-width="1" stroke-opacity="0.85"/><rect x="1358.80" y="773.60" width="14.60" height="176.90" fill="url(#cy0)" stroke="#4ab6d2" stroke-width="1" stroke-opacity="0.85"/><text x="94.4" y="1004.0" font-size="19" letter-spacing="1" font-weight="300" fill="#000">每小时的损益</text><g stroke="#8e8e8e" stroke-width="1"><path d="M87.0 1014.5H455.5"/><path d="M87.0 1038.0H455.5"/><path d="M87.0 1061.5H455.5"/><path d="M87.0 1085.0H455.5"/><path d="M87.0 1108.5H455.5"/><path d="M87.0 1132.0H455.5"/><path d="M87.0 1155.5H455.5"/><path d="M87.0 1179.0H455.5"/><path d="M87.0 1202.5H455.5"/><path d="M95.5 1014.0V1210.0"/><path d="M110.5 1202.5V1210.0"/><path d="M125.5 1202.5V1210.0"/><path d="M140.5 1202.5V1210.0"/><path d="M155.5 1202.5V1210.0"/><path d="M170.5 1202.5V1210.0"/><path d="M185.5 1202.5V1210.0"/><path d="M200.5 1202.5V1210.0"/><path d="M215.5 1202.5V1210.0"/><path d="M230.5 1202.5V1210.0"/><path d="M245.5 1202.5V1210.0"/><path d="M260.5 1202.5V1210.0"/><path d="M275.5 1202.5V1210.0"/><path d="M290.5 1202.5V1210.0"/><path d="M305.5 1202.5V1210.0"/><path d="M320.5 1202.5V1210.0"/><path d="M335.5 1202.5V1210.0"/><path d="M350.5 1202.5V1210.0"/><path d="M365.5 1202.5V1210.0"/><path d="M380.5 1202.5V1210.0"/><path d="M395.5 1202.5V1210.0"/><path d="M410.5 1202.5V1210.0"/><path d="M425.5 1202.5V1210.0"/><path d="M440.5 1202.5V1210.0"/></g><g font-size="13.5" fill="#000" class="cl"><text x="81.0" y="1019.3" text-anchor="end">1700</text><text x="81.0" y="1113.3" text-anchor="end">850</text><text x="81.0" y="1207.3" text-anchor="end">0</text></g><rect x="201.60" y="1108.80" width="5.90" height="93.70" fill="url(#bl1)" stroke="#7890dc" stroke-width="1" stroke-opacity="0.85"/><rect x="208.50" y="1138.20" width="5.90" height="64.30" fill="url(#r21)" stroke="#ec7c5c" stroke-width="1" stroke-opacity="0.85"/><rect x="216.60" y="1114.70" width="5.90" height="87.80" fill="url(#bl1)" stroke="#7890dc" stroke-width="1" stroke-opacity="0.85"/><rect x="223.50" y="1134.60" width="5.90" height="67.90" fill="url(#r21)" stroke="#ec7c5c" stroke-width="1" stroke-opacity="0.85"/><rect x="231.60" y="1153.90" width="5.90" height="48.60" fill="url(#bl1)" stroke="#7890dc" stroke-width="1" stroke-opacity="0.85"/><rect x="261.60" y="1126.10" width="5.90" height="76.40" fill="url(#bl1)" stroke="#7890dc" stroke-width="1" stroke-opacity="0.85"/><rect x="268.50" y="1141.50" width="5.90" height="61.00" fill="url(#r21)" stroke="#ec7c5c" stroke-width="1" stroke-opacity="0.85"/><rect x="276.60" y="1086.50" width="5.90" height="116.00" fill="url(#bl1)" stroke="#7890dc" stroke-width="1" stroke-opacity="0.85"/><rect x="283.50" y="1134.60" width="5.90" height="67.90" fill="url(#r21)" stroke="#ec7c5c" stroke-width="1" stroke-opacity="0.85"/><rect x="291.60" y="1014.60" width="5.90" height="187.90" fill="url(#bl1)" stroke="#7890dc" stroke-width="1" stroke-opacity="0.85"/><rect x="298.50" y="1056.20" width="5.90" height="146.30" fill="url(#r21)" stroke="#ec7c5c" stroke-width="1" stroke-opacity="0.85"/><rect x="306.60" y="1092.10" width="5.90" height="110.40" fill="url(#bl1)" stroke="#7890dc" stroke-width="1" stroke-opacity="0.85"/><rect x="313.50" y="1121.40" width="5.90" height="81.10" fill="url(#r21)" stroke="#ec7c5c" stroke-width="1" stroke-opacity="0.85"/><rect x="321.60" y="1133.50" width="5.90" height="69.00" fill="url(#bl1)" stroke="#7890dc" stroke-width="1" stroke-opacity="0.85"/><text x="557.4" y="1004.0" font-size="19" letter-spacing="1" font-weight="300" fill="#000">每周的损益</text><g stroke="#8e8e8e" stroke-width="1"><path d="M550.0 1014.5H901.5"/><path d="M550.0 1038.0H901.5"/><path d="M550.0 1061.5H901.5"/><path d="M550.0 1085.0H901.5"/><path d="M550.0 1108.5H901.5"/><path d="M550.0 1132.0H901.5"/><path d="M550.0 1155.5H901.5"/><path d="M550.0 1179.0H901.5"/><path d="M550.0 1202.5H901.5"/><path d="M558.5 1014.0V1210.0"/><path d="M607.5 1202.5V1210.0"/><path d="M656.5 1202.5V1210.0"/><path d="M705.5 1202.5V1210.0"/><path d="M754.5 1202.5V1210.0"/><path d="M803.5 1202.5V1210.0"/><path d="M852.5 1202.5V1210.0"/></g><g font-size="13.5" fill="#000" class="cl"><text x="544.0" y="1019.3" text-anchor="end">2600</text><text x="544.0" y="1066.3" text-anchor="end">1950</text><text x="544.0" y="1113.3" text-anchor="end">1300</text><text x="544.0" y="1160.3" text-anchor="end">650</text><text x="544.0" y="1207.3" text-anchor="end">0</text></g><rect x="619.60" y="1081.30" width="12.00" height="121.20" fill="url(#bl1)" stroke="#7890dc" stroke-width="1" stroke-opacity="0.85"/><rect x="632.60" y="1115.50" width="12.00" height="87.00" fill="url(#r21)" stroke="#ec7c5c" stroke-width="1" stroke-opacity="0.85"/><rect x="668.60" y="1041.60" width="12.00" height="160.90" fill="url(#bl1)" stroke="#7890dc" stroke-width="1" stroke-opacity="0.85"/><rect x="681.60" y="1092.20" width="12.00" height="110.30" fill="url(#r21)" stroke="#ec7c5c" stroke-width="1" stroke-opacity="0.85"/><rect x="717.60" y="1019.90" width="12.00" height="182.60" fill="url(#bl1)" stroke="#7890dc" stroke-width="1" stroke-opacity="0.85"/><rect x="730.60" y="1093.20" width="12.00" height="109.30" fill="url(#r21)" stroke="#ec7c5c" stroke-width="1" stroke-opacity="0.85"/><rect x="766.60" y="1043.90" width="12.00" height="158.60" fill="url(#bl1)" stroke="#7890dc" stroke-width="1" stroke-opacity="0.85"/><rect x="779.60" y="1091.20" width="12.00" height="111.30" fill="url(#r21)" stroke="#ec7c5c" stroke-width="1" stroke-opacity="0.85"/><rect x="815.60" y="1090.50" width="12.00" height="112.00" fill="url(#bl1)" stroke="#7890dc" stroke-width="1" stroke-opacity="0.85"/><rect x="828.60" y="1138.50" width="12.00" height="64.00" fill="url(#r21)" stroke="#ec7c5c" stroke-width="1" stroke-opacity="0.85"/><text x="1020.4" y="1004.0" font-size="19" letter-spacing="1" font-weight="300" fill="#000">每月的损益</text><g stroke="#8e8e8e" stroke-width="1"><path d="M1013.0 1014.5H1381.5"/><path d="M1013.0 1038.0H1381.5"/><path d="M1013.0 1061.5H1381.5"/><path d="M1013.0 1085.0H1381.5"/><path d="M1013.0 1108.5H1381.5"/><path d="M1013.0 1132.0H1381.5"/><path d="M1013.0 1155.5H1381.5"/><path d="M1013.0 1179.0H1381.5"/><path d="M1013.0 1202.5H1381.5"/><path d="M1021.5 1014.0V1210.0"/><path d="M1051.5 1202.5V1210.0"/><path d="M1081.5 1202.5V1210.0"/><path d="M1111.5 1202.5V1210.0"/><path d="M1141.5 1202.5V1210.0"/><path d="M1171.5 1202.5V1210.0"/><path d="M1201.5 1202.5V1210.0"/><path d="M1231.5 1202.5V1210.0"/><path d="M1261.5 1202.5V1210.0"/><path d="M1291.5 1202.5V1210.0"/><path d="M1321.5 1202.5V1210.0"/><path d="M1351.5 1202.5V1210.0"/></g><g font-size="13.5" fill="#000" class="cl"><text x="1007.0" y="1019.3" text-anchor="end">1300</text><text x="1007.0" y="1113.3" text-anchor="end">650</text><text x="1007.0" y="1207.3" text-anchor="end">0</text></g><rect x="1028.80" y="1032.60" width="7.00" height="169.90" fill="url(#bl1)" stroke="#7890dc" stroke-width="1" stroke-opacity="0.85"/><rect x="1036.80" y="1084.40" width="7.00" height="118.10" fill="url(#r21)" stroke="#ec7c5c" stroke-width="1" stroke-opacity="0.85"/><rect x="1058.80" y="1127.70" width="7.00" height="74.80" fill="url(#bl1)" stroke="#7890dc" stroke-width="1" stroke-opacity="0.85"/><rect x="1088.80" y="1042.70" width="7.00" height="159.80" fill="url(#bl1)" stroke="#7890dc" stroke-width="1" stroke-opacity="0.85"/><rect x="1096.80" y="1058.50" width="7.00" height="144.00" fill="url(#r21)" stroke="#ec7c5c" stroke-width="1" stroke-opacity="0.85"/><rect x="1118.80" y="1117.60" width="7.00" height="84.90" fill="url(#bl1)" stroke="#7890dc" stroke-width="1" stroke-opacity="0.85"/><rect x="1148.80" y="1029.20" width="7.00" height="173.30" fill="url(#bl1)" stroke="#7890dc" stroke-width="1" stroke-opacity="0.85"/><rect x="1156.80" y="1059.80" width="7.00" height="142.70" fill="url(#r21)" stroke="#ec7c5c" stroke-width="1" stroke-opacity="0.85"/><rect x="1178.80" y="1083.70" width="7.00" height="118.80" fill="url(#bl1)" stroke="#7890dc" stroke-width="1" stroke-opacity="0.85"/><rect x="1186.80" y="1126.40" width="7.00" height="76.10" fill="url(#r21)" stroke="#ec7c5c" stroke-width="1" stroke-opacity="0.85"/><rect x="1208.80" y="1061.80" width="7.00" height="140.70" fill="url(#bl1)" stroke="#7890dc" stroke-width="1" stroke-opacity="0.85"/><rect x="1216.80" y="1122.30" width="7.00" height="80.20" fill="url(#r21)" stroke="#ec7c5c" stroke-width="1" stroke-opacity="0.85"/><rect x="1238.80" y="1097.80" width="7.00" height="104.70" fill="url(#bl1)" stroke="#7890dc" stroke-width="1" stroke-opacity="0.85"/><rect x="1246.80" y="1132.40" width="7.00" height="70.10" fill="url(#r21)" stroke="#ec7c5c" stroke-width="1" stroke-opacity="0.85"/><rect x="1268.80" y="1086.70" width="7.00" height="115.80" fill="url(#bl1)" stroke="#7890dc" stroke-width="1" stroke-opacity="0.85"/><rect x="1276.80" y="1143.90" width="7.00" height="58.60" fill="url(#r21)" stroke="#ec7c5c" stroke-width="1" stroke-opacity="0.85"/><rect x="1298.80" y="1080.70" width="7.00" height="121.80" fill="url(#bl1)" stroke="#7890dc" stroke-width="1" stroke-opacity="0.85"/><rect x="1306.80" y="1114.60" width="7.00" height="87.90" fill="url(#r21)" stroke="#ec7c5c" stroke-width="1" stroke-opacity="0.85"/><rect x="1328.80" y="1077.30" width="7.00" height="125.20" fill="url(#bl1)" stroke="#7890dc" stroke-width="1" stroke-opacity="0.85"/><rect x="1336.80" y="1127.70" width="7.00" height="74.80" fill="url(#r21)" stroke="#ec7c5c" stroke-width="1" stroke-opacity="0.85"/><rect x="1358.80" y="1094.80" width="7.00" height="107.70" fill="url(#bl1)" stroke="#7890dc" stroke-width="1" stroke-opacity="0.85"/><rect x="1366.80" y="1150.60" width="7.00" height="51.90" fill="url(#r21)" stroke="#ec7c5c" stroke-width="1" stroke-opacity="0.85"/></svg><div id="tabs"><div class="abs" style="left:2px;top:0;width:1396px;height:1.4px;background:#000"></div><div class="tab" style="left:21.0px">概览</div><div class="tab" style="left:87.5px">设置</div><div class="tab" style="left:153.5px">输入</div><div class="tab" style="left:322.0px">图表</div><div class="tab" style="left:388.0px">代理</div><div class="tab" style="left:454.0px">日志</div><div class="tsep" style="left:73px"></div><div class="tsep" style="left:139px"></div><div class="tsep" style="left:373px"></div><div class="tsep" style="left:439px"></div><div class="abs" style="left:205px;top:0;width:102px;height:29px;background:#fff;border:1.4px solid #000;border-top:none"></div><div class="tab" style="left:220px;color:#000">后台测试</div><div class="st" style="left:1105px;top:5px"><span class="n">12:02:08 / 12:02:51</span></div><div class="abs" style="left:1286px;top:3px;width:111px;height:27px;background:#9ccd66;border:1px solid #90c25b;text-align:center;line-height:27px">开始</div></div><div class="abs" style="left:2px;top:1193px;width:1427px;height:1px;background:#b4b4b4;z-index:5"></div><div class="abs" style="left:2px;top:1194px;width:1427px;height:1px;background:#fafafa;z-index:5"></div><div id="status"><div class="st" style="left:4px">查看帮忙,请按 <span class="n">F1</span></div><div class="st" style="left:493px"><span class="n" style="font-size:19.5px">Default</span></div><div class="ssep" style="left:486px"></div><div class="ssep" style="left:602px"></div><div class="ssep" style="left:769px"></div><div class="ssep" style="left:886px"></div><div class="ssep" style="left:1002px"></div><div class="ssep" style="left:1113px"></div><div class="ssep" style="left:1227px"></div><div class="ssep" style="left:1336px"></div><svg class="abs" style="left:1340px;top:0" width="91" height="35" viewBox="1340 1193 91 35"><g fill="#13a313"><rect x="1345" y="1214.2" width="2.5" height="4.6"/><rect x="1349.6" y="1211.6" width="2.5" height="7.2"/><rect x="1354.2" y="1208.7" width="2.5" height="10.1"/><rect x="1358.8" y="1205.3" width="2.5" height="13.5"/></g><rect x="1363.4" y="1202.7" width="1.4" height="16.1" fill="#dedede"/><g fill="#c4c4c4"><rect x="1424" y="1213.4" width="2.4" height="2.4"/><rect x="1420" y="1217.4" width="2.4" height="2.4"/><rect x="1424" y="1217.4" width="2.4" height="2.4"/><rect x="1416" y="1221.4" width="2.4" height="2.4"/><rect x="1420" y="1221.4" width="2.4" height="2.4"/><rect x="1424" y="1221.4" width="2.4" height="2.4"/></g></svg><div class="st" style="left:1373px;top:4.4px"><span class="n" style="font-size:20px">28.4 /</span></div></div></div><div id="frame"></div><div id="topstrip"></div></body></html>
